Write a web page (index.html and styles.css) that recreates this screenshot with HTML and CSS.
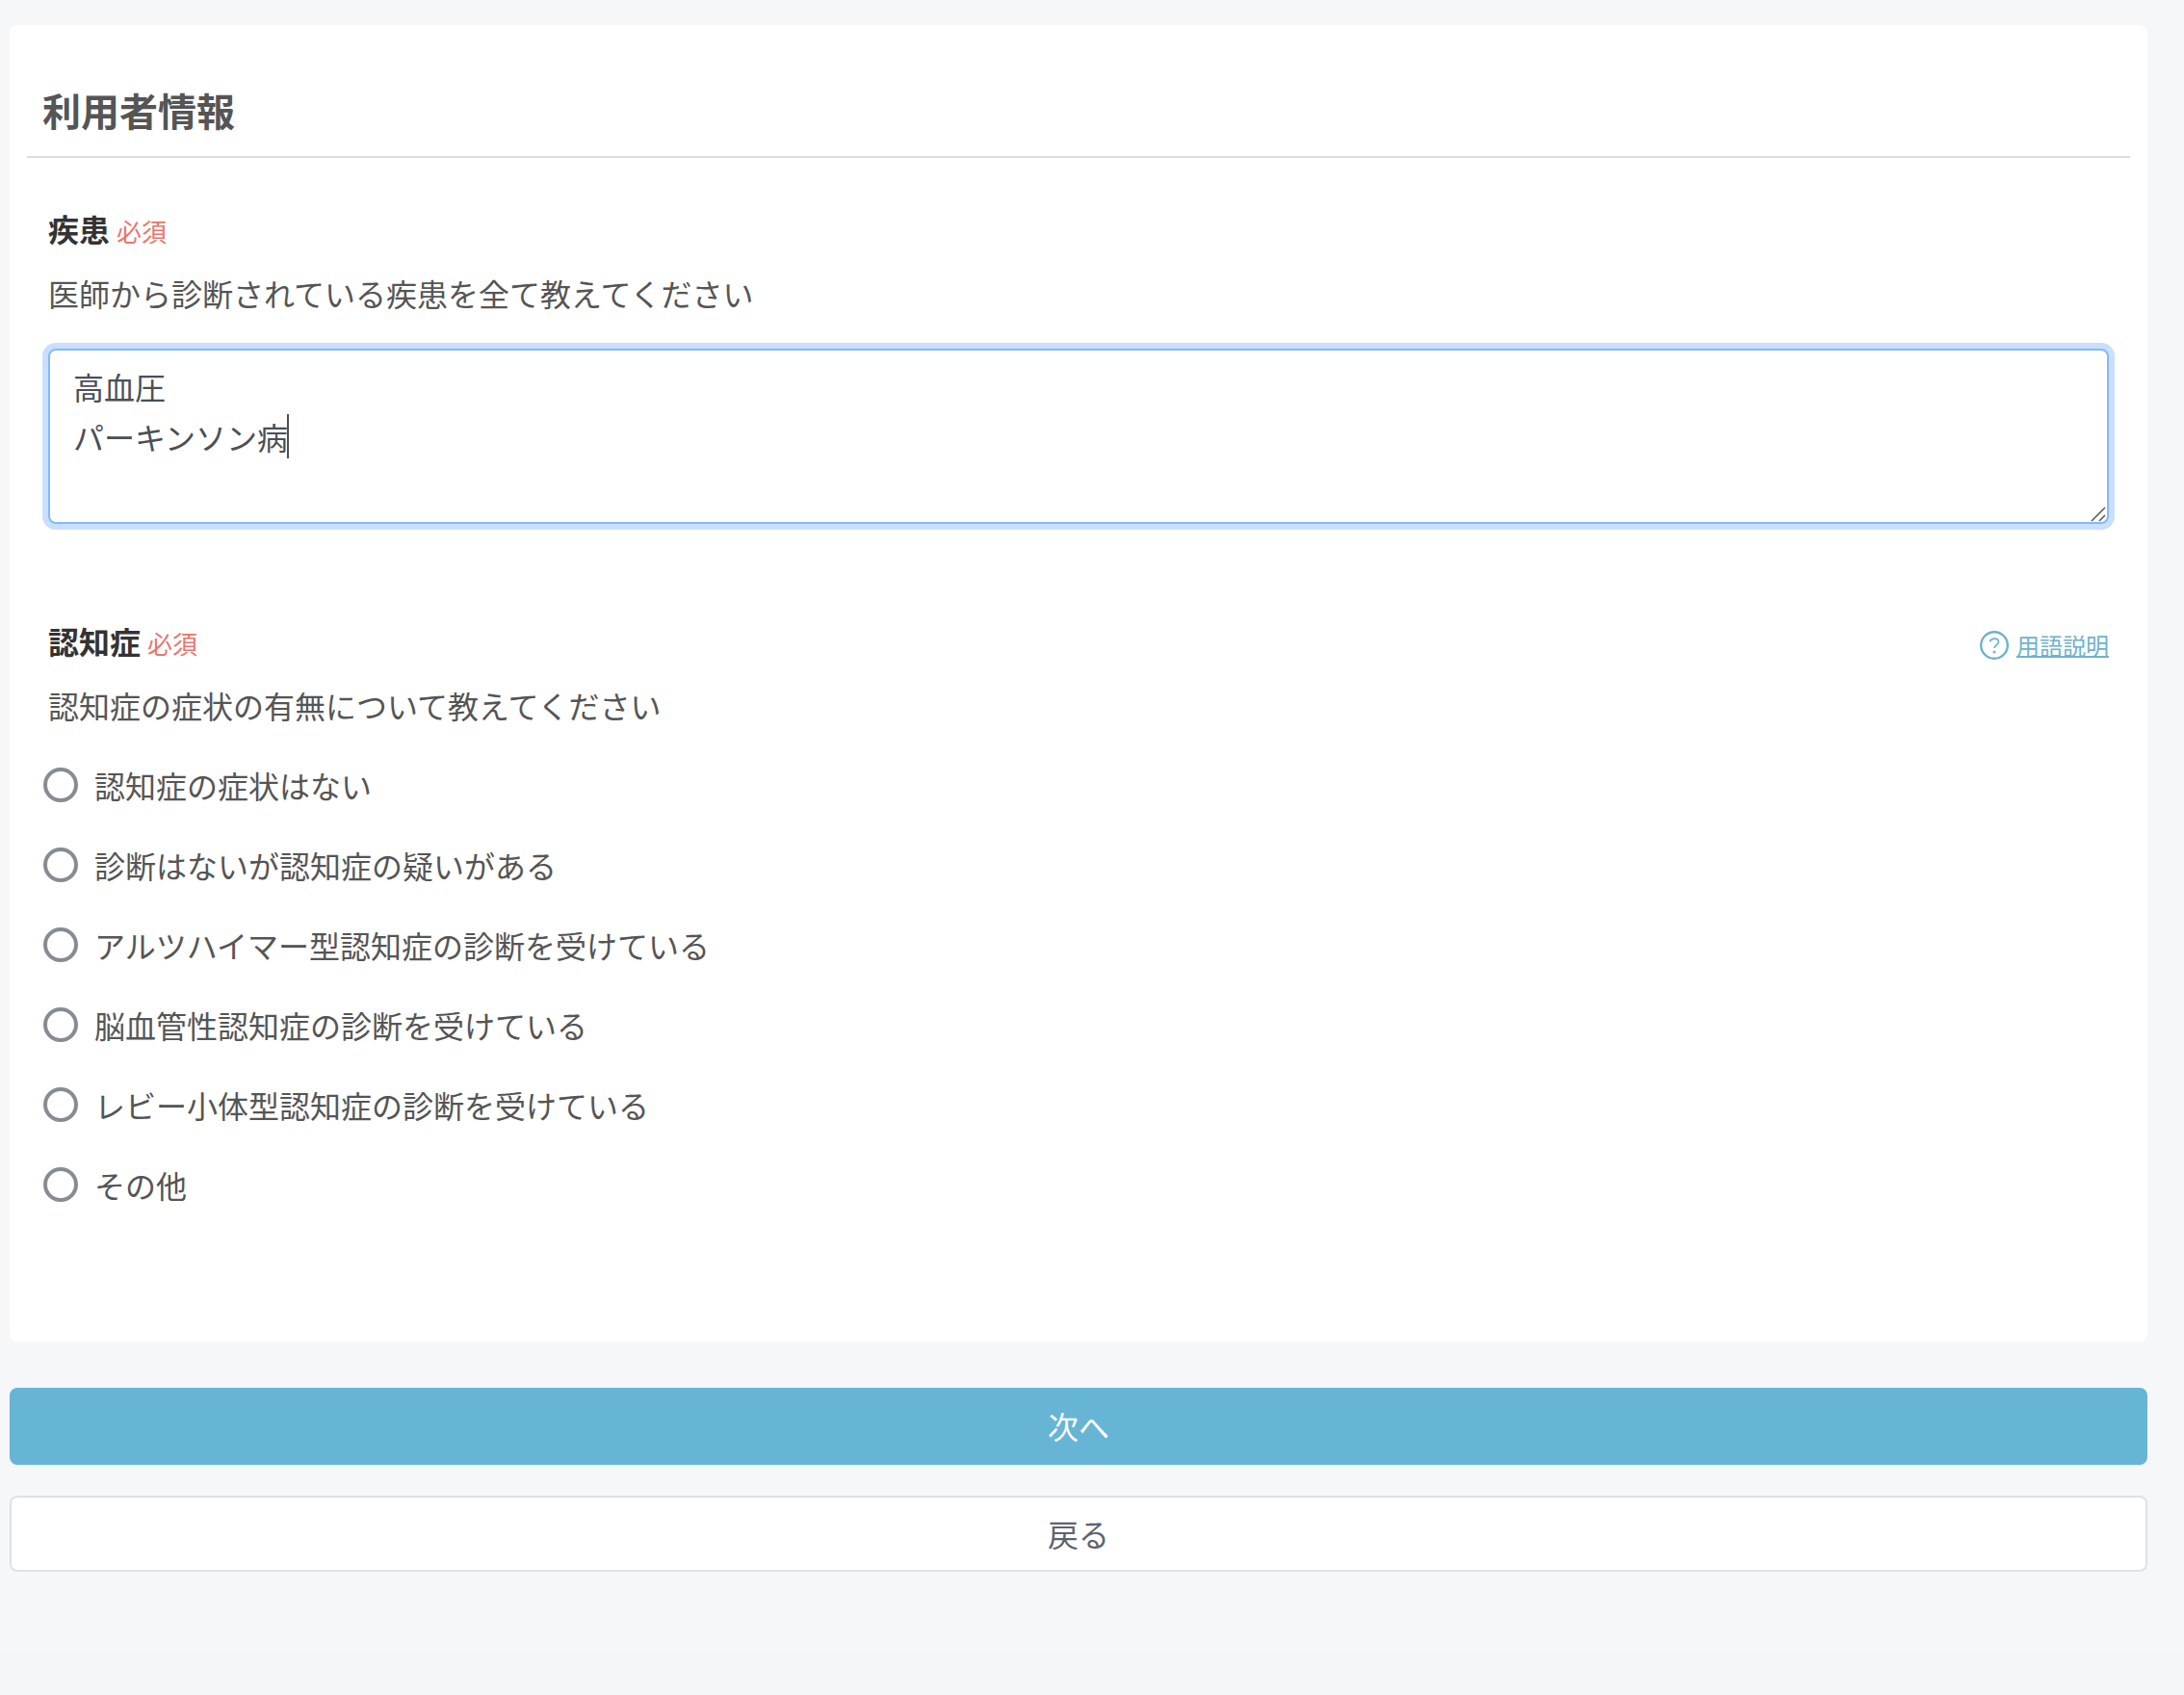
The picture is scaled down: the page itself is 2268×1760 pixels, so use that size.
FILE: index.html
```html
<!DOCTYPE html>
<html lang="ja">
<head>
<meta charset="utf-8">
<meta name="viewport" content="width=device-width, initial-scale=1">
<title>利用者情報</title>
<link rel="stylesheet" href="styles.css">
</head>
<body>
<main class="page">
  <form class="form">
    <div class="card">
      <h1 class="card-title">利用者情報</h1>

      <section class="field">
        <div class="field-head">
          <label class="field-label" for="disease">疾患</label>
          <span class="required">必須</span>
        </div>
        <p class="field-help" id="disease-help">医師から診断されている疾患を全て教えてください</p>
        <div class="textarea-wrap">
          <textarea class="textarea" id="disease" rows="3" spellcheck="false" aria-describedby="disease-help">高血圧
パーキンソン病</textarea>
          <span class="caret"></span>
          <svg class="grip" viewBox="0 0 16 16" aria-hidden="true"><path d="M1 15 15 1M9 15l6-6"/></svg>
        </div>
      </section>

      <section class="field field-dementia" role="radiogroup" aria-labelledby="dementia-label">
        <div class="field-head">
          <h2 class="field-label" id="dementia-label">認知症</h2>
          <span class="required">必須</span>
          <a class="glossary" href="#">
            <svg class="glossary-icon" viewBox="0 0 30 30" aria-hidden="true">
              <circle cx="15" cy="15" r="13.8" stroke-width="2.4"/>
              <path d="M10.4 11.2C11.1 9 12.8 8.1 15 8.1c2.7 0 4.5 1.3 4.5 3.4 0 3.2-4.4 3.1-4.4 6.6" stroke-width="1.7"/>
              <circle class="dot" cx="15" cy="22" r="1.5"/>
            </svg>
            <span class="glossary-text">用語説明</span>
          </a>
        </div>
        <p class="field-help">認知症の症状の有無について教えてください</p>
        <div class="options">
          <label class="option"><input class="radio" type="radio" name="dementia">認知症の症状はない</label>
          <label class="option"><input class="radio" type="radio" name="dementia">診断はないが認知症の疑いがある</label>
          <label class="option"><input class="radio" type="radio" name="dementia">アルツハイマー型認知症の診断を受けている</label>
          <label class="option"><input class="radio" type="radio" name="dementia">脳血管性認知症の診断を受けている</label>
          <label class="option"><input class="radio" type="radio" name="dementia">レビー小体型認知症の診断を受けている</label>
          <label class="option"><input class="radio" type="radio" name="dementia">その他</label>
        </div>
      </section>
    </div>

    <div class="actions">
      <button class="button button-next" type="button">次へ</button>
      <button class="button button-back" type="button">戻る</button>
    </div>
  </form>
</main>
</body>
</html>
```
FILE: styles.css
```css
*,
*::before,
*::after {
  box-sizing: border-box;
}

body {
  margin: 0;
  background: #f3f7fa;
  color: #555;
  font-family: "Noto Sans CJK JP", sans-serif;
  font-size: 32px;
  line-height: 52px;
}

.page {
  padding: 26px 38px 82px 10px;
  background: #f5f7f9;
}

.card {
  padding: 58px 18px 122px;
  background: #fff;
  border-radius: 8px;
}

.card-title {
  margin: 0 0 47px;
  padding: 0 16px 18px;
  border-bottom: 2px solid #ddd;
  font-size: 40px;
  line-height: 60px;
}

.field {
  padding: 0 22px;
}

.field-dementia {
  margin-top: 95px;
}

.field-head {
  display: flex;
  align-items: baseline;
  gap: 7px;
}

.field-label {
  margin: 0;
  color: #333;
  font-size: 32px;
  font-weight: 700;
}

.required {
  color: #e9756d;
  font-size: 26px;
  line-height: 36px;
}

.field-help {
  margin: 15px 0 0;
}

.textarea-wrap {
  position: relative;
  margin-top: 32px;
}

.textarea {
  display: block;
  width: 100%;
  height: 182px;
  padding: 11px 24px;
  border: 2px solid #85b9fb;
  border-radius: 8px;
  outline: 0;
  box-shadow: 0 0 0 6px #c8dfff;
  background: #fff;
  color: #495057;
  font: inherit;
  resize: none;
}

.caret {
  position: absolute;
  top: 68px;
  left: 248px;
  width: 2px;
  height: 46px;
  background: #495057;
}

.grip {
  position: absolute;
  right: 3px;
  bottom: 2px;
  width: 16px;
  height: 16px;
  fill: none;
  stroke: #555;
  stroke-width: 1.5;
}

.glossary {
  display: flex;
  align-items: center;
  align-self: flex-end;
  gap: 8px;
  margin: 0 0 3px auto;
  color: #6db3c9;
  font-size: 24px;
  line-height: 36px;
  text-decoration: none;
}

.glossary-icon {
  width: 30px;
  height: 30px;
  fill: none;
  stroke: currentColor;
}

.glossary-icon .dot {
  fill: currentColor;
  stroke: none;
}

.glossary-text {
  text-decoration: underline;
  text-decoration-thickness: 2px;
  text-underline-offset: 1px;
}

.options {
  margin: 15px 0 0 -5px;
}

.option {
  display: flex;
  align-items: center;
  gap: 17px;
  height: 83px;
}

.radio {
  flex: none;
  width: 36px;
  height: 36px;
  margin: 0;
  border: 4px solid #868c92;
  border-radius: 50%;
  background: #fff;
  appearance: none;
}

.radio:checked {
  border-width: 10px;
  border-color: #67b5d5;
}

.actions {
  display: grid;
  gap: 32px;
  margin-top: 48px;
}

.button {
  width: 100%;
  height: 80px;
  padding: 0 0 2px;
  border: 2px solid transparent;
  border-radius: 8px;
  font: inherit;
  cursor: pointer;
}

.button-next {
  border-color: #67b5d5;
  background: #67b5d5;
  color: #fff;
}

.button-back {
  height: 79px;
  border-color: #dee2e6;
  background: #fff;
  color: #5c6370;
}
```
